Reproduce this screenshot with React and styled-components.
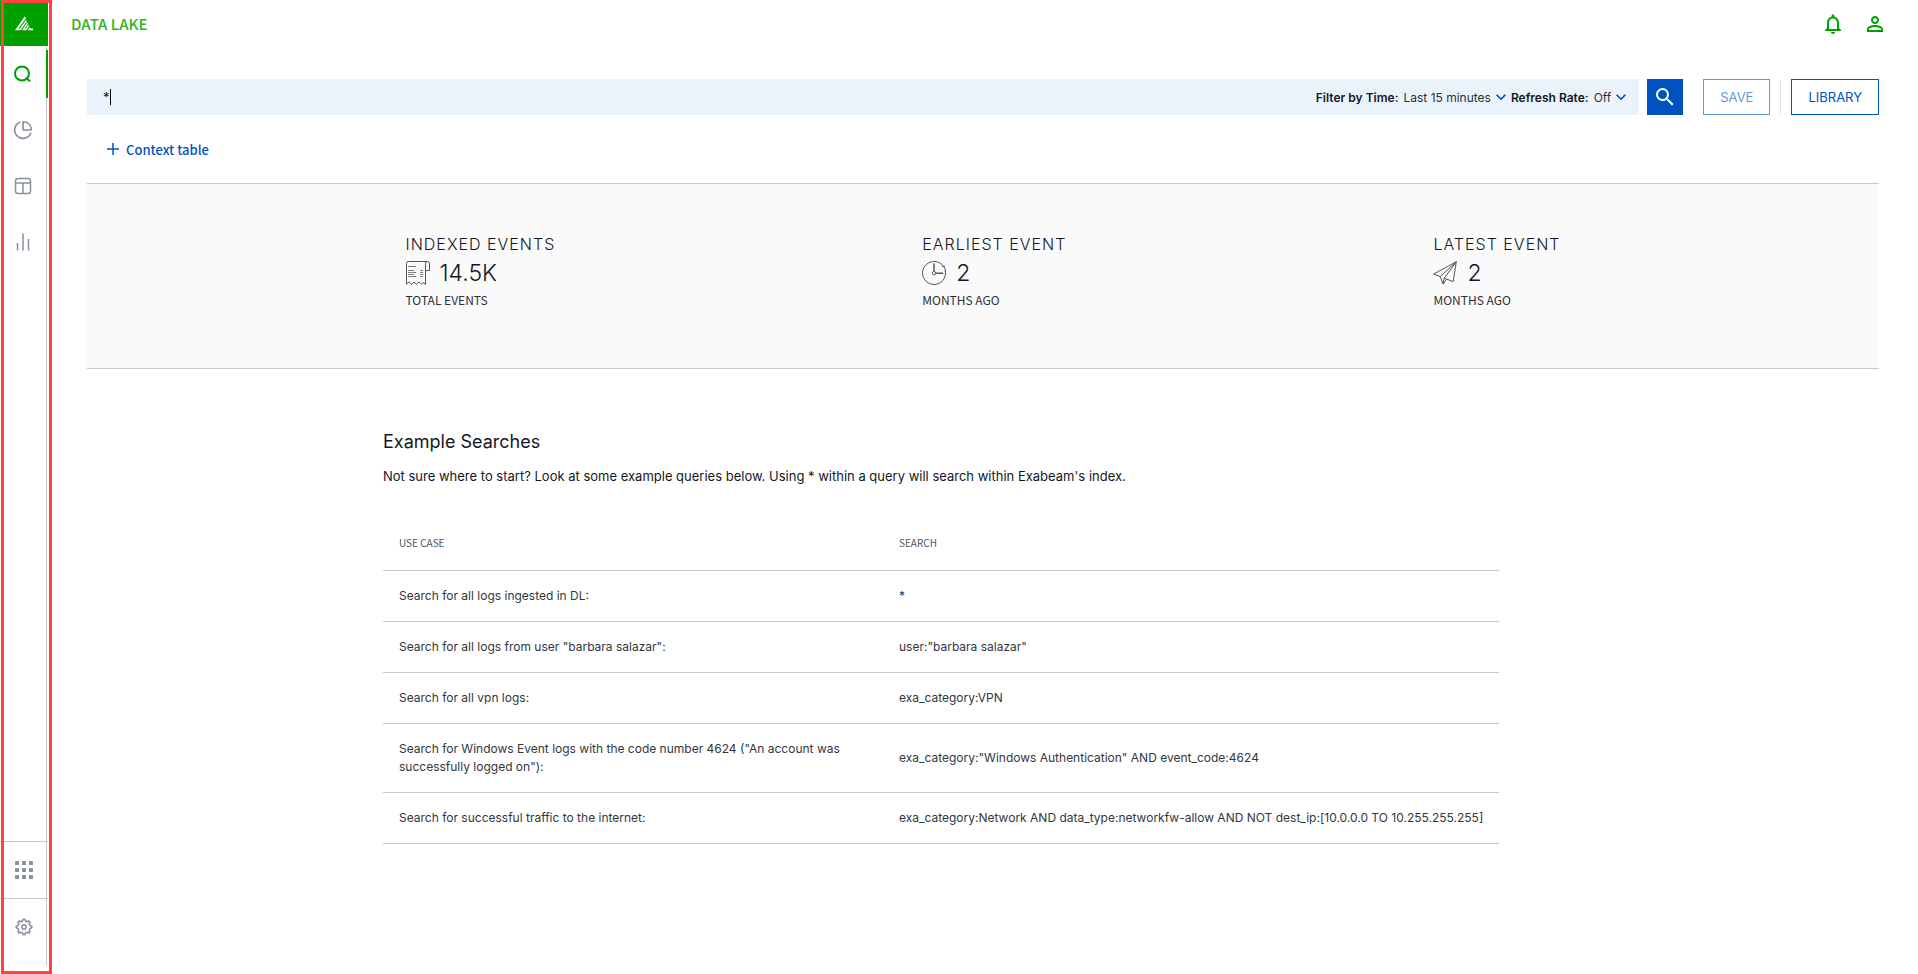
import { ChartPie } from 'lucide-react';
import { MdKeyboardArrowDown, MdNotificationsNone, MdPersonOutline, MdSearch } from 'react-icons/md';
import styled, { createGlobalStyle } from 'styled-components';

const GlobalStyle = createGlobalStyle`
  * {
    box-sizing: border-box;
  }

  body {
    margin: 0;
    background: #fff;
    color: #14171f;
    font-family: Inter, 'Liberation Sans', sans-serif;
    font-size: 13px;
  }

  button, input, select {
    font: inherit;
    color: inherit;
  }
`;

const condensed = `'Noto Sans CJK SC', 'Noto Sans', sans-serif`;

const Page = styled.div`
  display: flex;
  min-height: 100vh;
`;

const Sidebar = styled.nav`
  position: relative;
  display: flex;
  flex-direction: column;
  flex: none;
  width: 48px;
  height: 100vh;
  padding-bottom: 8px;
`;

const Highlight = styled.div`
  position: absolute;
  inset: 0 -4px 0 1px;
  border: 3px solid #ff4242;
  pointer-events: none;
`;

const Logo = styled.a`
  display: flex;
  align-items: center;
  justify-content: center;
  height: 46px;
  background: #009f00;
`;

const NavGroup = styled.div`
  flex: ${({ $grow }) => ($grow ? 1 : 'none')};
  display: flex;
  flex-direction: column;
  gap: 8px;
  width: 47px;
  padding-top: ${({ $grow }) => ($grow ? '4px' : 0)};
  border-right: 1px solid #c8c8c8;
`;

const NavItem = styled.a`
  display: flex;
  align-items: center;
  justify-content: center;
  width: 48px;
  height: 48px;
  color: ${({ $active }) => ($active ? '#009f00' : '#8a909c')};
  border-right: 2px solid ${({ $active }) => ($active ? '#009f00' : 'transparent')};
`;

const FooterItem = styled(NavItem)`
  height: ${({ $last }) => ($last ? '68px' : '57px')};
  padding-bottom: ${({ $last }) => ($last ? '12px' : 0)};
  border-top: 1px solid #c8c8c8;
  border-right: 0;
`;

const Main = styled.div`
  flex: 1;
  min-width: 0;
`;

const TopBar = styled.header`
  display: flex;
  align-items: center;
  justify-content: space-between;
  height: 48px;
  padding: 0 31px 0 23px;
`;

const Title = styled.h1`
  margin: 0;
  color: #2fb51a;
  font-family: ${condensed};
  font-size: 15px;
  font-weight: 500;
  line-height: 20px;
`;

const TopActions = styled.div`
  display: flex;
  gap: 18px;
`;

const IconButton = styled.button`
  display: flex;
  padding: 0;
  border: 0;
  background: none;
  color: #009f00;
`;

const Content = styled.main`
  padding: 31px 39px 0;
`;

const SearchRow = styled.form`
  display: flex;
  height: 36px;
`;

const SearchField = styled.div`
  display: flex;
  align-items: center;
  flex: 1;
  padding: 0 8px 0 16px;
  background: #eaf3fc;
`;

const QueryInput = styled.input`
  field-sizing: content;
  min-width: 4px;
  padding: 0;
  border: 0;
  outline: 0;
  background: none;
`;

const Caret = styled.span`
  width: 1px;
  height: 16px;
  background: #000;
`;

const Filters = styled.div`
  display: flex;
  align-items: center;
  margin-left: auto;
  font-size: 12px;
`;

const FilterLabel = styled.label`
  margin-right: 5px;
  font-weight: 600;
`;

const FilterSelect = styled.select`
  appearance: none;
  field-sizing: content;
  padding: 0;
  border: 0;
  background: none;
  color: #2c2f36;
`;

const Chevron = styled(MdKeyboardArrowDown)`
  width: 20px;
  height: 20px;
  color: #0052c0;
`;

const SearchButton = styled.button`
  display: flex;
  align-items: center;
  justify-content: center;
  width: 36px;
  margin: 0 20px 0 8px;
  padding: 0;
  border: 0;
  background: #0052c0;
  color: #fff;
`;

const OutlineButton = styled.button`
  padding: 0 16px;
  border: 1px solid #0052c0;
  background: #fff;
  color: #0052c0;
  opacity: ${({ disabled }) => (disabled ? 0.6 : 1)};
`;

const Divider = styled.span`
  width: 1px;
  margin: 1px 10px;
  background: #e4e4e4;
`;

const ContextButton = styled.button`
  display: flex;
  align-items: center;
  gap: 7px;
  height: 24px;
  margin: 22px 0 22px 20px;
  padding: 0;
  border: 0;
  background: none;
  color: #0052c0;
  font-family: ${condensed};
  font-size: 13px;
  font-weight: 500;
`;

const Stats = styled.section`
  display: flex;
  justify-content: space-around;
  height: 186px;
  margin-top: 12px;
  padding: 49px 135px 0;
  border: 1px solid #c8c8c8;
  border-width: 1px 0;
  background: #fafafa;
`;

const StatTitle = styled.h2`
  margin: 0;
  font-size: 16px;
  font-weight: 300;
  line-height: 22px;
  letter-spacing: 1px;
`;

const StatValue = styled.div`
  display: flex;
  align-items: center;
  gap: 10px;
  height: 35px;
  font-size: 23px;
  font-weight: 300;
`;

const StatUnit = styled.div`
  color: #2c2f36;
  font-family: ${condensed};
  font-size: 12px;
  line-height: 20px;
`;

const Examples = styled.section`
  margin: 61px 0 0 296px;
`;

const ExamplesTitle = styled.h2`
  margin: 0 0 12px;
  font-size: 18px;
  font-weight: 400;
  line-height: 24px;
`;

const ExamplesText = styled.p`
  margin: 0 0 31px;
  line-height: 20px;
`;

const Table = styled.table`
  border-collapse: collapse;
  font-size: 12px;
  line-height: 18px;
  color: #33363d;
`;

const HeadCell = styled.th`
  height: 53px;
  padding: 0 16px;
  border-bottom: 1px solid #c8c8c8;
  color: #4f5663;
  font-family: ${condensed};
  font-size: 10px;
  font-weight: 400;
  text-align: left;
`;

const Cell = styled.td`
  padding: 16px;
  border-bottom: 1px solid #c8c8c8;

  &:first-child {
    width: 500px;
  }
`;

const LogoIcon = () => (
  <svg width="18" height="15" viewBox="0 0 18 15" fill="#fff">
    <path d="M0 14.2L9.6 .6L11 2.2L3.4 12.8H4.8L11 4L11.9 5.2L5.6 14.2Z" />
    <path d="M7 14.2L12.2 6.4L13 7.8L9.6 12.8H10.6L13.4 8.8L14.2 10L11.4 14.2Z" />
    <path d="M12.8 14.2L14.6 11.4Q15.6 12.6 18 12.6V14.2Z" />
  </svg>
);

const SearchIcon = () => (
  <svg width="18" height="18" viewBox="0 0 18 18" fill="none" stroke="currentColor" strokeWidth="2">
    <circle cx="8" cy="8.5" r="7" />
    <path d="M12 12.5L16 16.5" />
  </svg>
);

const LayoutIcon = () => (
  <svg width="18" height="18" viewBox="0 0 18 18" fill="none" stroke="currentColor" strokeWidth="1.5">
    <rect x="1.5" y="1.5" width="15" height="15" rx="2.5" />
    <path d="M1.5 6H16.5M9 6V16.5" />
  </svg>
);

const BarsIcon = () => (
  <svg width="18" height="20" viewBox="0 0 18 20" fill="none" stroke="currentColor" strokeWidth="1.5">
    <path d="M3.5 11V18.5M9 1.5V18.5M14.5 7V18.5" />
  </svg>
);

const AppsIcon = () => (
  <svg width="18" height="18" viewBox="0 0 18 18" fill="currentColor">
    {[0, 7, 14].map((y) =>
      [0, 7, 14].map((x) => <rect key={`${x}-${y}`} x={x} y={y} width="4" height="4" rx="0.5" />)
    )}
  </svg>
);

const GearIcon = () => (
  <svg width="18" height="18" viewBox="0 0 18 18" fill="none" stroke="currentColor" strokeWidth="1.5" strokeLinejoin="round">
    <path d="M7.6 3L8.2 1.2H9.8L10.4 3L12.2 3.8L13.9 3L15 4.1L14.2 5.8L15 7.6L16.8 8.2V9.8L15 10.4L14.2 12.2L15 13.9L13.9 15L12.2 14.2L10.4 15L9.8 16.8H8.2L7.6 15L5.8 14.2L4.1 15L3 13.9L3.8 12.2L3 10.4L1.2 9.8V8.2L3 7.6L3.8 5.8L3 4.1L4.1 3L5.8 3.8Z" />
    <circle cx="9" cy="9" r="2.2" />
  </svg>
);

const PlusIcon = () => (
  <svg width="12" height="12" viewBox="0 0 12 12" stroke="currentColor" strokeWidth="1.5">
    <path d="M6 0V12M0 6H12" />
  </svg>
);

const ReceiptIcon = () => (
  <svg width="24" height="24" viewBox="0 0 24 24" fill="none" stroke="#50575e">
    <path d="M21 .5H2.5Q.5.5.5 2.5V23L3 21L5.5 23.3L8 21L10.5 23.3L13 21L15.5 23.3L17 21.5L19.5 23.3V2.5Q19.5.5 21.3.5Q23.5.5 23.5 3V9.5H19.5" />
    <path d="M2 5.5H10M2 9.5H8M2 11.5H10M2 13.5H8M2 15.5H10M14 9.5H17M14 11.5H17M14 13.5H17M14 15.5H17" stroke="#7b8085" />
  </svg>
);

const ClockIcon = () => (
  <svg width="24" height="24" viewBox="0 0 24 24" fill="none" stroke="#50575e">
    <path d="M21.6 5.6A11.5 11.5 0 1 0 23.2 9.2M20 5.5L22.8 5.2" />
    <path d="M22.2 5.5A11.5 11.5 0 0 1 23.5 12" />
    <path d="M12 2.5V10.5M14 12.2H21" strokeWidth="1.5" />
    <circle cx="12" cy="12.2" r="1.7" />
  </svg>
);

const PlaneIcon = () => (
  <svg width="24" height="24" viewBox="0 0 24 24" fill="none" stroke="#50575e" strokeLinejoin="round">
    <path d="M23.3 .7L.7 13L7.2 15.6L23.3 .7L20.2 20.6L11.2 17.2L23.3 .7M7.2 15.6L10 23L11.2 17.2M10 23L13.6 18.2" />
  </svg>
);

const navItems = [
  { icon: SearchIcon, label: 'Search', active: true },
  { icon: ChartPie, label: 'Visualize' },
  { icon: LayoutIcon, label: 'Dashboards' },
  { icon: BarsIcon, label: 'Reports' }
];

const stats = [
  { title: 'INDEXED EVENTS', icon: ReceiptIcon, value: '14.5K', unit: 'TOTAL EVENTS' },
  { title: 'EARLIEST EVENT', icon: ClockIcon, value: '2', unit: 'MONTHS AGO' },
  { title: 'LATEST EVENT', icon: PlaneIcon, value: '2', unit: 'MONTHS AGO' }
];

const examples = [
  ['Search for all logs ingested in DL:', '*'],
  ['Search for all logs from user "barbara salazar":', 'user:"barbara salazar"'],
  ['Search for all vpn logs:', 'exa_category:VPN'],
  [
    'Search for Windows Event logs with the code number 4624 ("An account was successfully logged on"):',
    'exa_category:"Windows Authentication" AND event_code:4624'
  ],
  [
    'Search for successful traffic to the internet:',
    'exa_category:Network AND data_type:networkfw-allow AND NOT dest_ip:[10.0.0.0 TO 10.255.255.255]'
  ]
];

const App = () => (
  <>
    <GlobalStyle />
    <Page>
      <Sidebar>
        <Logo href="#" aria-label="Home">
          <LogoIcon />
        </Logo>
        <NavGroup $grow>
          {navItems.map((item) => {
            const Icon = item.icon;
            return (
              <NavItem key={item.label} href="#" aria-label={item.label} $active={item.active}>
                <Icon size={20} />
              </NavItem>
            );
          })}
        </NavGroup>
        <NavGroup>
          <div>
            <FooterItem href="#" aria-label="Apps">
              <AppsIcon />
            </FooterItem>
            <FooterItem href="#" aria-label="Settings" $last>
              <GearIcon />
            </FooterItem>
          </div>
        </NavGroup>
        <Highlight />
      </Sidebar>

      <Main>
        <TopBar>
          <Title>DATA LAKE</Title>
          <TopActions>
            <IconButton aria-label="Notifications">
              <MdNotificationsNone size={24} />
            </IconButton>
            <IconButton aria-label="Account">
              <MdPersonOutline size={24} />
            </IconButton>
          </TopActions>
        </TopBar>

        <Content>
          <SearchRow onSubmit={(e) => e.preventDefault()}>
            <SearchField>
              <QueryInput aria-label="Query" defaultValue="*" />
              <Caret />
              <Filters>
                <FilterLabel htmlFor="time">Filter by Time:</FilterLabel>
                <FilterSelect id="time">
                  <option>Last 15 minutes</option>
                </FilterSelect>
                <Chevron />
                <FilterLabel htmlFor="refresh">Refresh Rate:</FilterLabel>
                <FilterSelect id="refresh">
                  <option>Off</option>
                </FilterSelect>
                <Chevron />
              </Filters>
            </SearchField>
            <SearchButton aria-label="Search">
              <MdSearch size={24} />
            </SearchButton>
            <OutlineButton type="button" disabled>SAVE</OutlineButton>
            <Divider />
            <OutlineButton type="button">LIBRARY</OutlineButton>
          </SearchRow>

          <ContextButton>
            <PlusIcon />
            Context table
          </ContextButton>

          <Stats>
            {stats.map((stat) => {
              const Icon = stat.icon;
              return (
                <div key={stat.title}>
                  <StatTitle>{stat.title}</StatTitle>
                  <StatValue>
                    <Icon />
                    {stat.value}
                  </StatValue>
                  <StatUnit>{stat.unit}</StatUnit>
                </div>
              );
            })}
          </Stats>

          <Examples>
            <ExamplesTitle>Example Searches</ExamplesTitle>
            <ExamplesText>
              Not sure where to start? Look at some example queries below. Using * within a query will search within Exabeam's index.
            </ExamplesText>
            <Table>
              <thead>
                <tr>
                  <HeadCell>USE CASE</HeadCell>
                  <HeadCell>SEARCH</HeadCell>
                </tr>
              </thead>
              <tbody>
                {examples.map(([useCase, query]) => (
                  <tr key={useCase}>
                    <Cell>{useCase}</Cell>
                    <Cell>{query}</Cell>
                  </tr>
                ))}
              </tbody>
            </Table>
          </Examples>
        </Content>
      </Main>
    </Page>
  </>
);

export default App;
